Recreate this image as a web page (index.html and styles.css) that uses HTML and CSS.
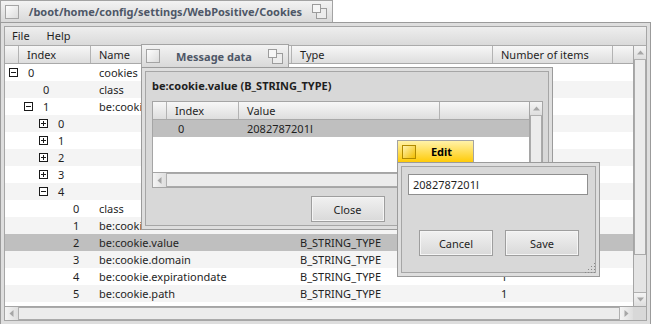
FILE: index.html
```html
<!doctype html>
<html lang="en">
	<head>
		<title>Cookies</title>
		<meta charset="utf-8">
		<link rel="stylesheet" href="styles.css">
	</head>
	<body>

<div class="win main">
	<div class="tab">
		<span class="close"></span>
		<span class="title">/boot/home/config/settings/WebPositive/Cookies</span>
		<svg class="zoom" viewBox="0 0 15 15" width="15" height="15"><rect x="4.5" y="4.5" width="10" height="10" fill="#ececec" stroke="#9c9c9c"/><rect x="0.5" y="0.5" width="8" height="8" fill="#f6f6f6" stroke="#9c9c9c"/></svg>
	</div>
	<div class="frame">
		<div class="inner main-inner">
			<div class="menubar"><span>File</span><span>Help</span></div>
			<div class="listview big">
				<div class="listtop">
					<div class="cols">
						<div class="head">
							<div class="h c-pad"></div>
							<div class="h c-index">Index</div>
							<div class="h c-name">Name</div>
							<div class="h c-type">Type</div>
							<div class="h c-count">Number of items</div>
							<div class="h c-rest"></div>
						</div>
						<div class="rows">
							<div class="row"><div class="c-tree l0"><i class="exp"></i>0</div><div class="c-name">cookies</div></div>
							<div class="row"><div class="c-tree l1"><i class="leaf"></i>0</div><div class="c-name">class</div></div>
							<div class="row"><div class="c-tree l1"><i class="exp"></i>1</div><div class="c-name">be:cookies</div></div>
							<div class="row"><div class="c-tree l2"><i class="exp plus"></i>0</div></div>
							<div class="row"><div class="c-tree l2"><i class="exp plus"></i>1</div></div>
							<div class="row"><div class="c-tree l2"><i class="exp plus"></i>2</div></div>
							<div class="row"><div class="c-tree l2"><i class="exp plus"></i>3</div></div>
							<div class="row"><div class="c-tree l2"><i class="exp"></i>4</div></div>
							<div class="row"><div class="c-tree l3"><i class="leaf"></i>0</div><div class="c-name">class</div></div>
							<div class="row"><div class="c-tree l3"><i class="leaf"></i>1</div><div class="c-name">be:cookie.name</div></div>
							<div class="row sel"><div class="c-tree l3"><i class="leaf"></i>2</div><div class="c-name">be:cookie.value</div><div class="c-type">B_STRING_TYPE</div><div class="c-count">1</div></div>
							<div class="row"><div class="c-tree l3"><i class="leaf"></i>3</div><div class="c-name">be:cookie.domain</div><div class="c-type">B_STRING_TYPE</div><div class="c-count">1</div></div>
							<div class="row"><div class="c-tree l3"><i class="leaf"></i>4</div><div class="c-name">be:cookie.expirationdate</div><div class="c-type">B_STRING_TYPE</div><div class="c-count">1</div></div>
							<div class="row"><div class="c-tree l3"><i class="leaf"></i>5</div><div class="c-name">be:cookie.path</div><div class="c-type">B_STRING_TYPE</div><div class="c-count">1</div></div>
						</div>
					</div>
					<div class="vscroll">
						<div class="arrow"><svg width="7" height="5"><path d="M0 4.5 L3.5 0.5 L7 4.5Z" fill="#a6a6a6"/></svg></div>
						<div class="thumb v-thumb"></div>
						<div class="track"></div>
						<div class="arrow bottom"><svg width="7" height="5"><path d="M0 0.5 L3.5 4.5 L7 0.5Z" fill="#a6a6a6"/></svg></div>
					</div>
				</div>
				<div class="hbar">
					<div class="hscroll">
						<div class="harrow"><svg width="5" height="7"><path d="M4.5 0 L0.5 3.5 L4.5 7Z" fill="#a6a6a6"/></svg></div>
						<div class="thumb h-thumb"></div>
						<div class="harrow right"><svg width="5" height="7"><path d="M0.5 0 L4.5 3.5 L0.5 7Z" fill="#a6a6a6"/></svg></div>
					</div>
					<div class="corner"></div>
				</div>
			</div>
		</div>
	</div>
</div>

<div class="win msg">
	<div class="tab">
		<span class="close"></span>
		<span class="title">Message data</span>
		<svg class="zoom" viewBox="0 0 15 15" width="15" height="15"><rect x="4.5" y="4.5" width="10" height="10" fill="#ececec" stroke="#9c9c9c"/><rect x="0.5" y="0.5" width="8" height="8" fill="#f6f6f6" stroke="#9c9c9c"/></svg>
	</div>
	<div class="frame">
		<div class="inner msg-inner">
			<div class="label">be:cookie.value (B_STRING_TYPE)</div>
			<div class="listview small">
				<div class="listtop">
					<div class="cols">
						<div class="head">
							<div class="h c-pad"></div>
							<div class="h c-index">Index</div>
							<div class="h c-value">Value</div>
							<div class="h c-rest"></div>
						</div>
						<div class="rows">
							<div class="row sel"><div class="c-pad"></div><div class="c-index">0</div><div class="c-value">2082787201l</div></div>
						</div>
					</div>
					<div class="vscroll">
						<div class="arrow"><svg width="7" height="5"><path d="M0 4.5 L3.5 0.5 L7 4.5Z" fill="#a6a6a6"/></svg></div>
						<div class="thumb v-thumb"></div>
					</div>
				</div>
				<div class="hbar">
					<div class="hscroll">
						<div class="harrow"><svg width="5" height="7"><path d="M4.5 0 L0.5 3.5 L4.5 7Z" fill="#a6a6a6"/></svg></div>
						<div class="thumb h-thumb"></div>
					</div>
					<div class="corner"></div>
				</div>
			</div>
			<div class="btnrow center"><button class="btn">Close</button></div>
		</div>
	</div>
</div>

<div class="win edit">
	<div class="tab">
		<span class="close"></span>
		<span class="title">Edit</span>
	</div>
	<div class="frame">
		<div class="inner edit-inner">
			<div class="field">2082787201l</div>
			<div class="btnrow"><button class="btn">Cancel</button><button class="btn">Save</button></div>
		</div>
	</div>
	<svg class="grip" width="12" height="12" viewBox="0 0 12 12">
		<rect x="9" y="1" width="1" height="1" fill="#888"/>
		<rect x="6" y="4" width="1" height="1" fill="#888"/><rect x="9" y="4" width="1" height="1" fill="#888"/>
		<rect x="3" y="7" width="1" height="1" fill="#888"/><rect x="6" y="7" width="1" height="1" fill="#888"/><rect x="9" y="7" width="1" height="1" fill="#888"/>
		<rect x="0" y="10" width="1" height="1" fill="#888"/><rect x="3" y="10" width="1" height="1" fill="#888"/><rect x="6" y="10" width="1" height="1" fill="#888"/><rect x="9" y="10" width="1" height="1" fill="#888"/>
	</svg>
</div>

	</body>
</html>
```

FILE: styles.css
```css
* {
	box-sizing: border-box;
	margin: 0;
	padding: 0;
}
html, body {
	width: 651px;
	height: 324px;
	overflow: hidden;
}
body {
	position: relative;
	background-color: #ffffff;
	color: #1f1f1f;
	font-family: "Noto Sans", sans-serif;
	font-size: 11px;
	line-height: 17px;
}

/* windows on the desktop */
.win { position: absolute; }
.main { left: 0; top: 0; width: 651px; }
.msg { left: 141px; top: 44px; width: 412px; }
.edit { left: 397px; top: 140px; width: 203px; }

.tab {
	display: flex;
	align-items: center;
	height: 22px;
	border: 1px solid #a3a3a3;
	border-bottom: none;
	background: linear-gradient(#f3f3f3, #d9d9d9);
}
.main .tab { width: 333px; }
.msg .tab { width: 148px; height: 23px; }
.edit .tab { width: 77px; background: linear-gradient(#fff2a8, #ffcb08); }

.close {
	width: 14px;
	height: 14px;
	margin-left: 4px;
	border: 1px solid #a4a4a4;
	background: linear-gradient(135deg, #fdfdfd, #dcdcdc);
}
.edit .close {
	border-color: #b08a00;
	background: linear-gradient(135deg, #fff3b0, #f2be00);
}
.title {
	flex: 1;
	text-align: center;
	font-weight: bold;
	color: #4e5767;
}
.edit .title { color: #000; padding-right: 6px; }
.zoom { margin-right: 5px; }

.frame {
	border: 1px solid #9b9b9b;
	padding: 3px;
	background: #dedede;
}
.inner {
	border: 1px solid #a6a6a6;
	background: #d8d8d8;
}

/* main window */
.main-inner { height: 295px; }
.menubar {
	display: flex;
	height: 19px;
	padding-left: 7px;
	border-bottom: 1px solid #ababab;
	background: linear-gradient(#eeeeee, #dadada);
	line-height: 18px;
}
.menubar span { margin-right: 17px; }

.listview { display: flex; flex-direction: column; }
.big { height: 274px; }
.listtop { display: flex; flex: 1; }
.cols { flex: 1; display: flex; flex-direction: column; background: #fff; }
.head {
	display: flex;
	height: 18px;
	border-bottom: 1px solid #a9a9a9;
	background: linear-gradient(#f7f7f7, #dedede);
}
.h {
	padding-left: 8px;
	border-right: 1px solid #b3b3b3;
	white-space: nowrap;
}
.c-pad { width: 14px; }
.c-index { width: 72px; }
.c-name, .c-type { width: 201px; }
.c-count { width: 120px; }
.c-value { width: 201px; }
.c-rest { flex: 1; border-right: none; }

.rows { flex: 1; }
.row { display: flex; height: 17px; white-space: nowrap; }
.row:nth-child(even) { background: #f4f4f4; }
.row.sel { background: #bfbfbf; }
.row .c-name, .row .c-type, .row .c-count, .row .c-value { padding-left: 8px; }
.row .c-index { padding-left: 11px; }

.c-tree { display: flex; align-items: center; width: 86px; }
.l0 { padding-left: 4px; }
.l1 { padding-left: 19px; }
.l2 { padding-left: 34px; }
.l3 { padding-left: 49px; }
.exp, .leaf { width: 9px; height: 9px; margin-right: 10px; }
.exp { position: relative; border: 1px solid #1a1a1a; background: #fff; }
.exp::before {
	content: "";
	position: absolute;
	left: 1px; top: 3px;
	width: 5px; height: 1px;
	background: #1a1a1a;
}
.exp.plus::after {
	content: "";
	position: absolute;
	left: 3px; top: 1px;
	width: 1px; height: 5px;
	background: #1a1a1a;
}

/* scroll bars */
.vscroll {
	display: flex;
	flex-direction: column;
	width: 13px;
	border-left: 1px solid #a5a5a5;
	background: #d6d6d6;
}
.arrow {
	display: flex;
	align-items: center;
	justify-content: center;
	height: 14px;
	border-bottom: 1px solid #b0b0b0;
	background: linear-gradient(#f4f4f4, #dedede);
}
.arrow.bottom { border-bottom: none; border-top: 1px solid #b0b0b0; }
.thumb { background: #ececec; border: 1px solid #aaaaaa; }
.v-thumb { height: 195px; border-top: none; }
.small .v-thumb { flex: 1; height: auto; border-bottom: none; }
.track { flex: 1; background: #e4e4e4; }

.hbar { display: flex; height: 14px; border-top: 1px solid #a5a5a5; }
.hscroll { display: flex; flex: 1; background: #d6d6d6; }
.harrow {
	display: flex;
	align-items: center;
	justify-content: center;
	width: 14px;
	border-right: 1px solid #b0b0b0;
	background: linear-gradient(90deg, #f4f4f4, #dedede);
}
.harrow.right { border-right: none; border-left: 1px solid #b0b0b0; }
.h-thumb { flex: 1; border-left: none; border-right: none; }
.corner { width: 13px; background: #d8d8d8; }

/* message data window */
.msg-inner {
	display: flex;
	flex-direction: column;
	height: 155px;
	padding: 6px 5px 0 6px;
}
.label { height: 16px; margin-bottom: 7px; font-weight: bold; line-height: 16px; }
.small { height: 87px; border: 1px solid #a5a5a5; }
.small .hbar { height: 15px; }

.btnrow { display: flex; gap: 12px; }
.btnrow.center { justify-content: center; margin-top: 8px; }
.btn {
	width: 74px;
	height: 26px;
	border: 1px solid #9e9e9e;
	box-shadow: inset 0 0 0 1px #f5f5f5;
	background: linear-gradient(#f1f1f1, #d9d9d9);
	color: #1f1f1f;
	font-family: "Noto Sans", sans-serif;
	font-size: 11px;
}

/* edit window */
.edit-inner { height: 107px; padding: 7px 0 0 6px; }
.field {
	width: 180px;
	height: 21px;
	padding-left: 4px;
	border: 1px solid #8f8f8f;
	background: #fff;
	line-height: 19px;
}
.edit-inner .btnrow { margin: 35px 0 0 11px; }
.grip { position: absolute; right: 3px; bottom: 3px; }
```
